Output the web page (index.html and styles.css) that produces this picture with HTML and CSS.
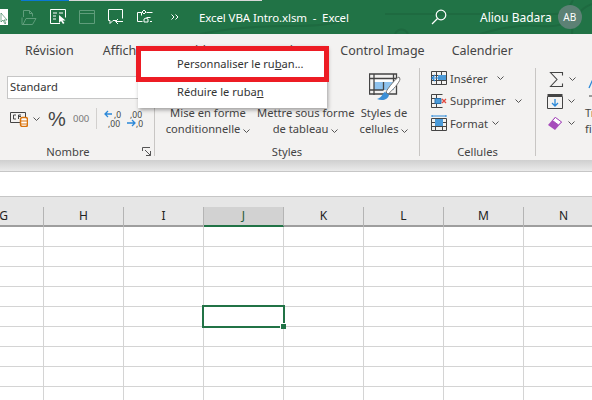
FILE: index.html
```html
<!DOCTYPE html>
<html lang="fr">

<head>
  <meta charset="UTF-8">
  <meta name="viewport" content="width=device-width, initial-scale=1.0">
  <title>Excel VBA Intro.xlsm - Excel</title>
  <link rel="stylesheet" href="styles.css">
</head>

<body>

  <svg class="defs" width="0" height="0">
    <symbol id="chev" viewBox="0 0 7 4"><path d="M.5.5l3 3 3-3" fill="none" stroke="#555" stroke-width="1"/></symbol>
  </svg>

  <!-- Title bar -->
  <header class="titlebar">
    <svg class="pattern" width="592" height="34" fill="none" stroke="#1e6a40" stroke-width="2">
      <path d="M385 14H555c10 0 14-6 18-14"/>
      <path d="M395 34c3-6 10-6 13 0M480 34c20-6 40-10 60-8s30-4 36-12"/>
      <path d="M572 34c0-14 8-26 20-30"/>
      <path d="M200 34c30-6 60-8 90-8s40-2 60-6"/>
    </svg>
    <div class="qat">
      <svg class="qat-first" width="8" height="16"><path fill="#fff" d="M0 0h8v16H0z"/><path d="M1 4v9l2-2 2 4 1-1-2-3h3z" fill="#fff" stroke="#217346" stroke-width=".6"/></svg>
      <svg width="16" height="16" fill="none" stroke="#5f9d7b"><path d="M2.500 8V1.500h6l3 3v3"/><path d="M8.500 1.500v3h3"/><path d="M1 8.500v7h10.500l3.500-6H5l-3 6"/></svg>
      <svg width="16" height="16" fill="none" stroke="#fff"><path d="M10 14.500H.5V.5h15v8"/><path d="M3 4h4M3 7h3M3 10h3M9 4h4"/><path d="M9 6v8l2-2 2 3 1.500-1-2-2.500h3z" fill="#fff" stroke="none"/></svg>
      <svg width="16" height="16" fill="none" stroke="#5f9d7b"><path d="M.5 1.500h15v13H.5zM.5 4.500h15"/></svg>
      <svg width="16" height="16" fill="none" stroke="#fff"><path d="M8 11.500H5l-3 3v-3H.5V.5h14v9"/><path d="M15 12.500H8M10 10l-2.500 2.500L10 15"/></svg>
      <svg width="16" height="16" fill="none" stroke="#fff"><path d="M.5 3.500h4v3M.5 3.500v9h5"/><path d="M5 3l2-2 2 2-2 2z"/><path d="M9.500 3.500h6M9.500 8.500h4"/><path d="M7 13V10l2-1 2 1v3z"/><path d="M13 12.500h2"/></svg>
      <svg class="qat-more" width="8" height="6" fill="none" stroke="#fff"><path d="M.5.5L3 3 .5 5.500M4.500.5L7 3 4.500 5.500"/></svg>
    </div>
    <div class="doc-title">Excel VBA Intro.xlsm&nbsp; -&nbsp; Excel</div>
    <svg class="search" width="16" height="16" fill="none" stroke="#fff" stroke-width="1.200"><circle cx="10" cy="6" r="4.800"/><path d="M6.500 9.500L1 15"/></svg>
    <div class="user">Aliou Badara</div>
    <div class="avatar">AB</div>
  </header>
  <div class="topline"><span class="topline-done"></span></div>

  <!-- Ribbon -->
  <section class="ribbon">
    <nav class="tabs">
      <span class="tab">Révision</span>
      <span class="tab">Affichage</span>
      <span class="tab">Aide</span>
      <span class="tab">Power Pivot</span>
      <span class="tab">Control Image</span>
      <span class="tab tab-last">Calendrier</span>
    </nav>

    <div class="groups">
      <div class="group group-number">
        <div class="group-body">
          <div class="combo">Standard</div>
          <div class="number-row">
            <svg class="num-money" width="18" height="16" fill="none" stroke="#444"><path d="M.5 1.500h15v10H.5z"/><path d="M6 4H3.500v4H6M11 4H8.500v4M8.500 5.500H11"/><rect x="10.500" y="6.500" width="7" height="9" rx="2" fill="#fff" stroke="#d9730d" stroke-width="1.500"/><path d="M11 10h6M11 13h6" stroke="#d9730d"/></svg>
            <svg class="chev" width="7" height="4"><use href="#chev"/></svg>
            <span class="percent">%</span>
            <span class="thousand">000</span>
            <span class="row-sep"></span>
            <svg class="decimals" width="18" height="18"><path d="M8 4H1M4 1L1 4l3 3" fill="none" stroke="#2b88d8" stroke-width="1.300"/><text x="10" y="8" class="dec">,0</text><text x="4" y="17" class="dec">,00</text></svg>
            <svg class="decimals decimals-right" width="18" height="18"><text x="4" y="8" class="dec">,00</text><path d="M1 13h8M6 10l3 3-3 3" fill="none" stroke="#2b88d8" stroke-width="1.300"/><text x="10" y="17" class="dec">,0</text></svg>
          </div>
        </div>
        <div class="group-label">Nombre
          <svg class="launcher" width="9" height="9" fill="none" stroke="#555"><path d="M.5 4V.5H8M8.500 8.500L3 3M8.500 4v4.500H4"/></svg>
        </div>
      </div>
      <span class="group-sep"></span>

      <div class="group group-styles">
        <div class="group-body big-row">
          <div class="big big-cond">
            <div class="big-icon"></div>
            <div>Mise en forme</div>
            <div>conditionnelle <svg width="7" height="4"><use href="#chev"/></svg></div>
          </div>
          <div class="big big-table">
            <div class="big-icon"></div>
            <div>Mettre sous forme</div>
            <div>de tableau <svg width="7" height="4"><use href="#chev"/></svg></div>
          </div>
          <div class="big big-cell">
            <div class="big-icon">
              <svg width="32" height="30" fill="none"><path d="M5 5h20v12H5z" fill="#8fc3ee"/><path d="M5 5h20v4H5z" fill="#fff"/><path d="M.5 1h27v20H.5zM.5 5.500h27M.5 17h14M5 1v21M14.500 9v8M24.500 1v10" stroke="#444" stroke-width="1.300"/><path d="M30 4c-3 1-11 11-13 15l2 2c4-3 12-12 12-15z" fill="#fff" stroke="#777"/><path d="M16 19c-3 1-2 5-8 7 5 2 11 1 12-4z" fill="#3c8fd6"/></svg>
            </div>
            <div>Styles de</div>
            <div>cellules <svg width="7" height="4"><use href="#chev"/></svg></div>
          </div>
        </div>
        <div class="group-label">Styles</div>
      </div>
      <span class="group-sep"></span>

      <div class="group group-cells">
        <div class="group-body">
          <div class="cmd">
            <svg width="16" height="14" fill="none" stroke="#444"><path d="M.5.500h15v13H.5zM.5 4.500h15M.5 9.500h15M5.500.5v13M10.500.5v13"/><path d="M7 4h8v5H7z" fill="#4a9ad8" stroke="none"/><path d="M9 7H1M4 4L1 7l3 3" stroke="#2b88d8" stroke-width="1.200"/></svg>
            <span class="cmd-text">Insérer</span>
            <svg class="chev-insert" width="7" height="4"><use href="#chev"/></svg>
          </div>
          <div class="cmd">
            <svg width="16" height="14" fill="none" stroke="#444"><path d="M.5.500h11M.5 13.500h11M.5.500v13M5.500.5v13M.5 4.500h5M.5 9.500h5"/><path d="M4 4.500h6v5H4z" fill="#4a9ad8" stroke="#2b6fa8"/><path d="M11 5l4 4M15 5l-4 4" stroke="#e2483d" stroke-width="1.300"/></svg>
            <span class="cmd-text">Supprimer</span>
            <svg class="chev-delete" width="7" height="4"><use href="#chev"/></svg>
          </div>
          <div class="cmd">
            <svg width="16" height="16" fill="none" stroke="#444"><path d="M.5 3.500h15v12H.5zM.5 7.500h15M.5 11.500h15M4.500 3.500v12M11.500 3.500v12"/><path d="M4 4h8v7H4z" fill="#4a9ad8" stroke="none"/><path d="M1 1h14M1 0v2M15 0v2" stroke="#2b88d8"/></svg>
            <span class="cmd-text">Format</span>
            <svg class="chev-format" width="7" height="4"><use href="#chev"/></svg>
          </div>
        </div>
        <div class="group-label">Cellules</div>
      </div>
      <span class="group-sep"></span>

      <div class="group group-edit">
        <div class="edit-tools">
          <div class="tool tool-sum">
            <svg width="15" height="15" fill="none" stroke="#444" stroke-width="1.100"><path d="M13.500 3.500V.5H1.500L8 7.500 1.500 14.500h12v-3"/></svg>
            <svg class="tool-chev" width="7" height="4"><use href="#chev"/></svg>
          </div>
          <div class="tool">
            <svg width="16" height="15" fill="none" stroke="#444"><path d="M.5 2.500h15v12H.5z"/><path d="M.5 1h15" stroke-width="2"/><path d="M8 5v7M5 9l3 3 3-3" stroke="#2b88d8" stroke-width="1.300"/></svg>
            <svg class="tool-chev" width="7" height="4"><use href="#chev"/></svg>
          </div>
          <div class="tool">
            <svg width="16" height="15"><path d="M1 9l7-8 7 5-7 8z" fill="#a64dbb"/><path d="M5.500 4.500l3-3 6 4.500-3 3z" fill="#fff" stroke="#a64dbb"/></svg>
            <svg class="tool-chev" width="7" height="4"><use href="#chev"/></svg>
          </div>
        </div>
        <div class="big big-sort">
          <div class="big-icon sort-icon">
            <svg width="20" height="30" fill="none" stroke="#2b88d8"><path d="M1 14l4-9 4 9" stroke-width="1.300"/><path d="M1 22h8M5 18v10" stroke="#444"/></svg>
          </div>
          <div>Trier et</div>
          <div>filtrer</div>
        </div>
      </div>
    </div>
  </section>
  <div class="ribbon-shadow"></div>

  <!-- Formula bar -->
  <div class="formula-bar"></div>

  <!-- Sheet -->
  <div class="col-header">
    <span class="col col-first">G</span>
    <span class="col">H</span>
    <span class="col">I</span>
    <span class="col col-active">J</span>
    <span class="col">K</span>
    <span class="col">L</span>
    <span class="col">M</span>
    <span class="col">N</span>
  </div>
  <main class="sheet">
    <div class="selected-cell"><span class="fill-handle"></span></div>
  </main>

  <!-- Context menu with the red annotation on top -->
  <div class="menu">
    <div class="menu-item">Personnaliser le ru<u>b</u>an...</div>
    <div class="menu-item">Réduire le ruba<u>n</u></div>
  </div>
  <div class="annotation"></div>

</body>

</html>
```

FILE: styles.css
```css
* {
  box-sizing: border-box;
}

html, body {
  margin: 0;
  padding: 0;
}

body {
  width: 592px;
  height: 400px;
  overflow: hidden;
  position: relative;
  font-family: "Noto Sans", "Open Sans", sans-serif;
  font-size: 11.2px;
  color: #444;
  background-color: #fff;
}

.defs {
  position: absolute;
}

svg {
  flex: none;
}

/* Title bar */
.titlebar {
  height: 34px;
  background-color: #217346;
  color: #fff;
  display: flex;
  align-items: center;
  overflow: hidden;
  position: relative;
}

.pattern {
  position: absolute;
  top: 0;
  left: 0;
}

.topline {
  position: absolute;
  top: 0;
  left: 21px;
  width: 241px;
  height: 1px;
  background-color: #d8d8d8;
}

.topline-done {
  display: block;
  width: 48px;
  height: 1px;
  background-color: #0a78d4;
}

.qat {
  display: flex;
  align-items: center;
  gap: 13px;
  position: relative;
}

.qat-more {
  margin-left: 5px;
}

.doc-title {
  margin-left: 20px;
  font-size: 11.5px;
  letter-spacing: -0.1px;
  position: relative;
  white-space: nowrap;
  width: 232px;
}

.search {
  position: relative;
}

.user {
  margin-left: 33px;
  font-size: 12px;
  position: relative;
  white-space: nowrap;
}

.avatar {
  margin-left: 6px;
  width: 24px;
  height: 24px;
  border-radius: 50%;
  background-color: #5d8175;
  font-size: 10px;
  display: flex;
  align-items: center;
  justify-content: center;
  position: relative;
}

/* Ribbon */
.ribbon {
  height: 126px;
  background-color: #f3f2f1;
  overflow: hidden;
}

.tabs {
  height: 32px;
  padding-left: 25px;
  display: flex;
  align-items: center;
  gap: 29px;
  font-size: 12.5px;
  white-space: nowrap;
}

.tab-last {
  margin-left: -2px;
}

.groups {
  display: flex;
  height: 94px;
}

.group-sep {
  width: 1px;
  height: 88px;
  margin-top: 2px;
  background-color: #c8c6c4;
  flex: none;
}

.group {
  flex: none;
  display: flex;
  flex-direction: column;
  height: 94px;
}

.group-body {
  flex: 1;
}

.group-label {
  height: 16px;
  line-height: 16px;
  text-align: center;
  position: relative;
}

.launcher {
  position: absolute;
  left: 135px;
  top: 3px;
}

.group-number {
  width: 154px;
  padding-left: 7px;
}

.group-number .group-label {
  width: 122px;
}

.combo {
  width: 140px;
  height: 23px;
  margin-top: 10px;
  padding-left: 2px;
  line-height: 20px;
  background-color: #fff;
  border: 1px solid #c6c6c6;
  color: #333;
}

.number-row {
  display: flex;
  align-items: center;
  height: 23px;
  margin-top: 8px;
  padding-left: 3px;
}

.chev {
  margin-left: 5px;
}

.percent {
  margin-left: 8px;
  font-family: "Liberation Sans", sans-serif;
  font-size: 20px;
  line-height: 20px;
  width: 18px;
}

.thousand {
  margin-left: 7px;
  font-size: 9.5px;
  color: #777;
}

.row-sep {
  width: 1px;
  height: 21px;
  margin-left: 7px;
  background-color: #d2d0ce;
}

.decimals {
  margin-left: 7px;
}

.decimals-right {
  margin-left: 4px;
}

.dec {
  font-size: 8.5px;
  fill: #444;
}

.group-styles {
  width: 264px;
}

.big-row {
  display: flex;
}

.big {
  flex: none;
  text-align: center;
  line-height: 16px;
  white-space: nowrap;
}

.big-icon {
  height: 39px;
  padding-top: 7px;
}

.big-cond {
  width: 102px;
  padding-left: 4px;
}

.big-table {
  width: 97px;
}

.big-cell {
  width: 60px;
}

.big-cell .big-icon {
  padding-left: 2px;
}

.group-cells {
  width: 115px;
}

.group-cells .group-body {
  padding-top: 1px;
  padding-left: 11px;
}

.cmd {
  display: flex;
  align-items: center;
  height: 22.5px;
}

.cmd-text {
  margin-left: 3px;
}

.chev-insert {
  margin-left: 9px;
}

.chev-delete {
  margin-left: 9px;
}

.chev-format {
  margin-left: 4px;
}

.group-edit {
  flex-direction: row;
  padding-left: 11px;
}

.edit-tools {
  width: 38px;
  padding-top: 2px;
}

.tool {
  display: flex;
  align-items: center;
  height: 22px;
}

.tool-chev {
  margin-left: 5px;
}

.tool-sum {
  padding-left: 2px;
}

.big-sort {
  text-align: left;
}

.sort-icon {
  padding-top: 8px;
  padding-left: 3px;
}

.ribbon-shadow {
  height: 11px;
  background: linear-gradient(#cfcfcf, #ebebeb);
}

/* Formula bar */
.formula-bar {
  height: 26px;
  background-color: #fff;
  border-top: 1px solid #c6c6c6;
  border-bottom: 1px solid #c6c6c6;
}

/* Sheet */
.col-header {
  height: 30px;
  padding-top: 10px;
  background-color: #e6e6e6;
  border-bottom: 2px solid #9e9e9e;
  display: flex;
  color: #222;
  font-size: 12px;
}

.col {
  flex: none;
  width: 80px;
  height: 20px;
  line-height: 18px;
  text-align: center;
  border-right: 1px solid #b4b4b4;
}

.col-first {
  margin-left: -36px;
}

.col-active {
  background-color: #d2d2d2;
  border-bottom: 2px solid #217346;
  color: #1d5c3a;
}

.sheet {
  height: 173px;
  position: relative;
  background-color: #fff;
  background-image:
    linear-gradient(#d4d4d4 1px, transparent 1px),
    linear-gradient(90deg, #d4d4d4 1px, transparent 1px);
  background-size: 80px 20px;
  background-position: 43px 19px;
}

.selected-cell {
  position: absolute;
  left: 202px;
  top: 78px;
  width: 83px;
  height: 23px;
  border: 2px solid #217346;
}

.fill-handle {
  position: absolute;
  right: -3px;
  bottom: -3px;
  width: 6px;
  height: 6px;
  background-color: #217346;
  border: 1px solid #fff;
  border-width: 1px 0 0 1px;
}

/* Context menu */
.menu {
  position: absolute;
  left: 138px;
  top: 46px;
  width: 189px;
  height: 62px;
  padding-top: 4px;
  background-color: #fff;
  box-shadow: 1px 2px 4px rgba(0, 0, 0, 0.35);
  color: #333;
  font-size: 11.1px;
}

.menu-item {
  height: 28px;
  line-height: 28px;
  padding-left: 39px;
  white-space: nowrap;
}

.annotation {
  position: absolute;
  left: 136px;
  top: 46px;
  width: 193px;
  height: 36px;
  border: 5px solid #ed1c24;
}
```
